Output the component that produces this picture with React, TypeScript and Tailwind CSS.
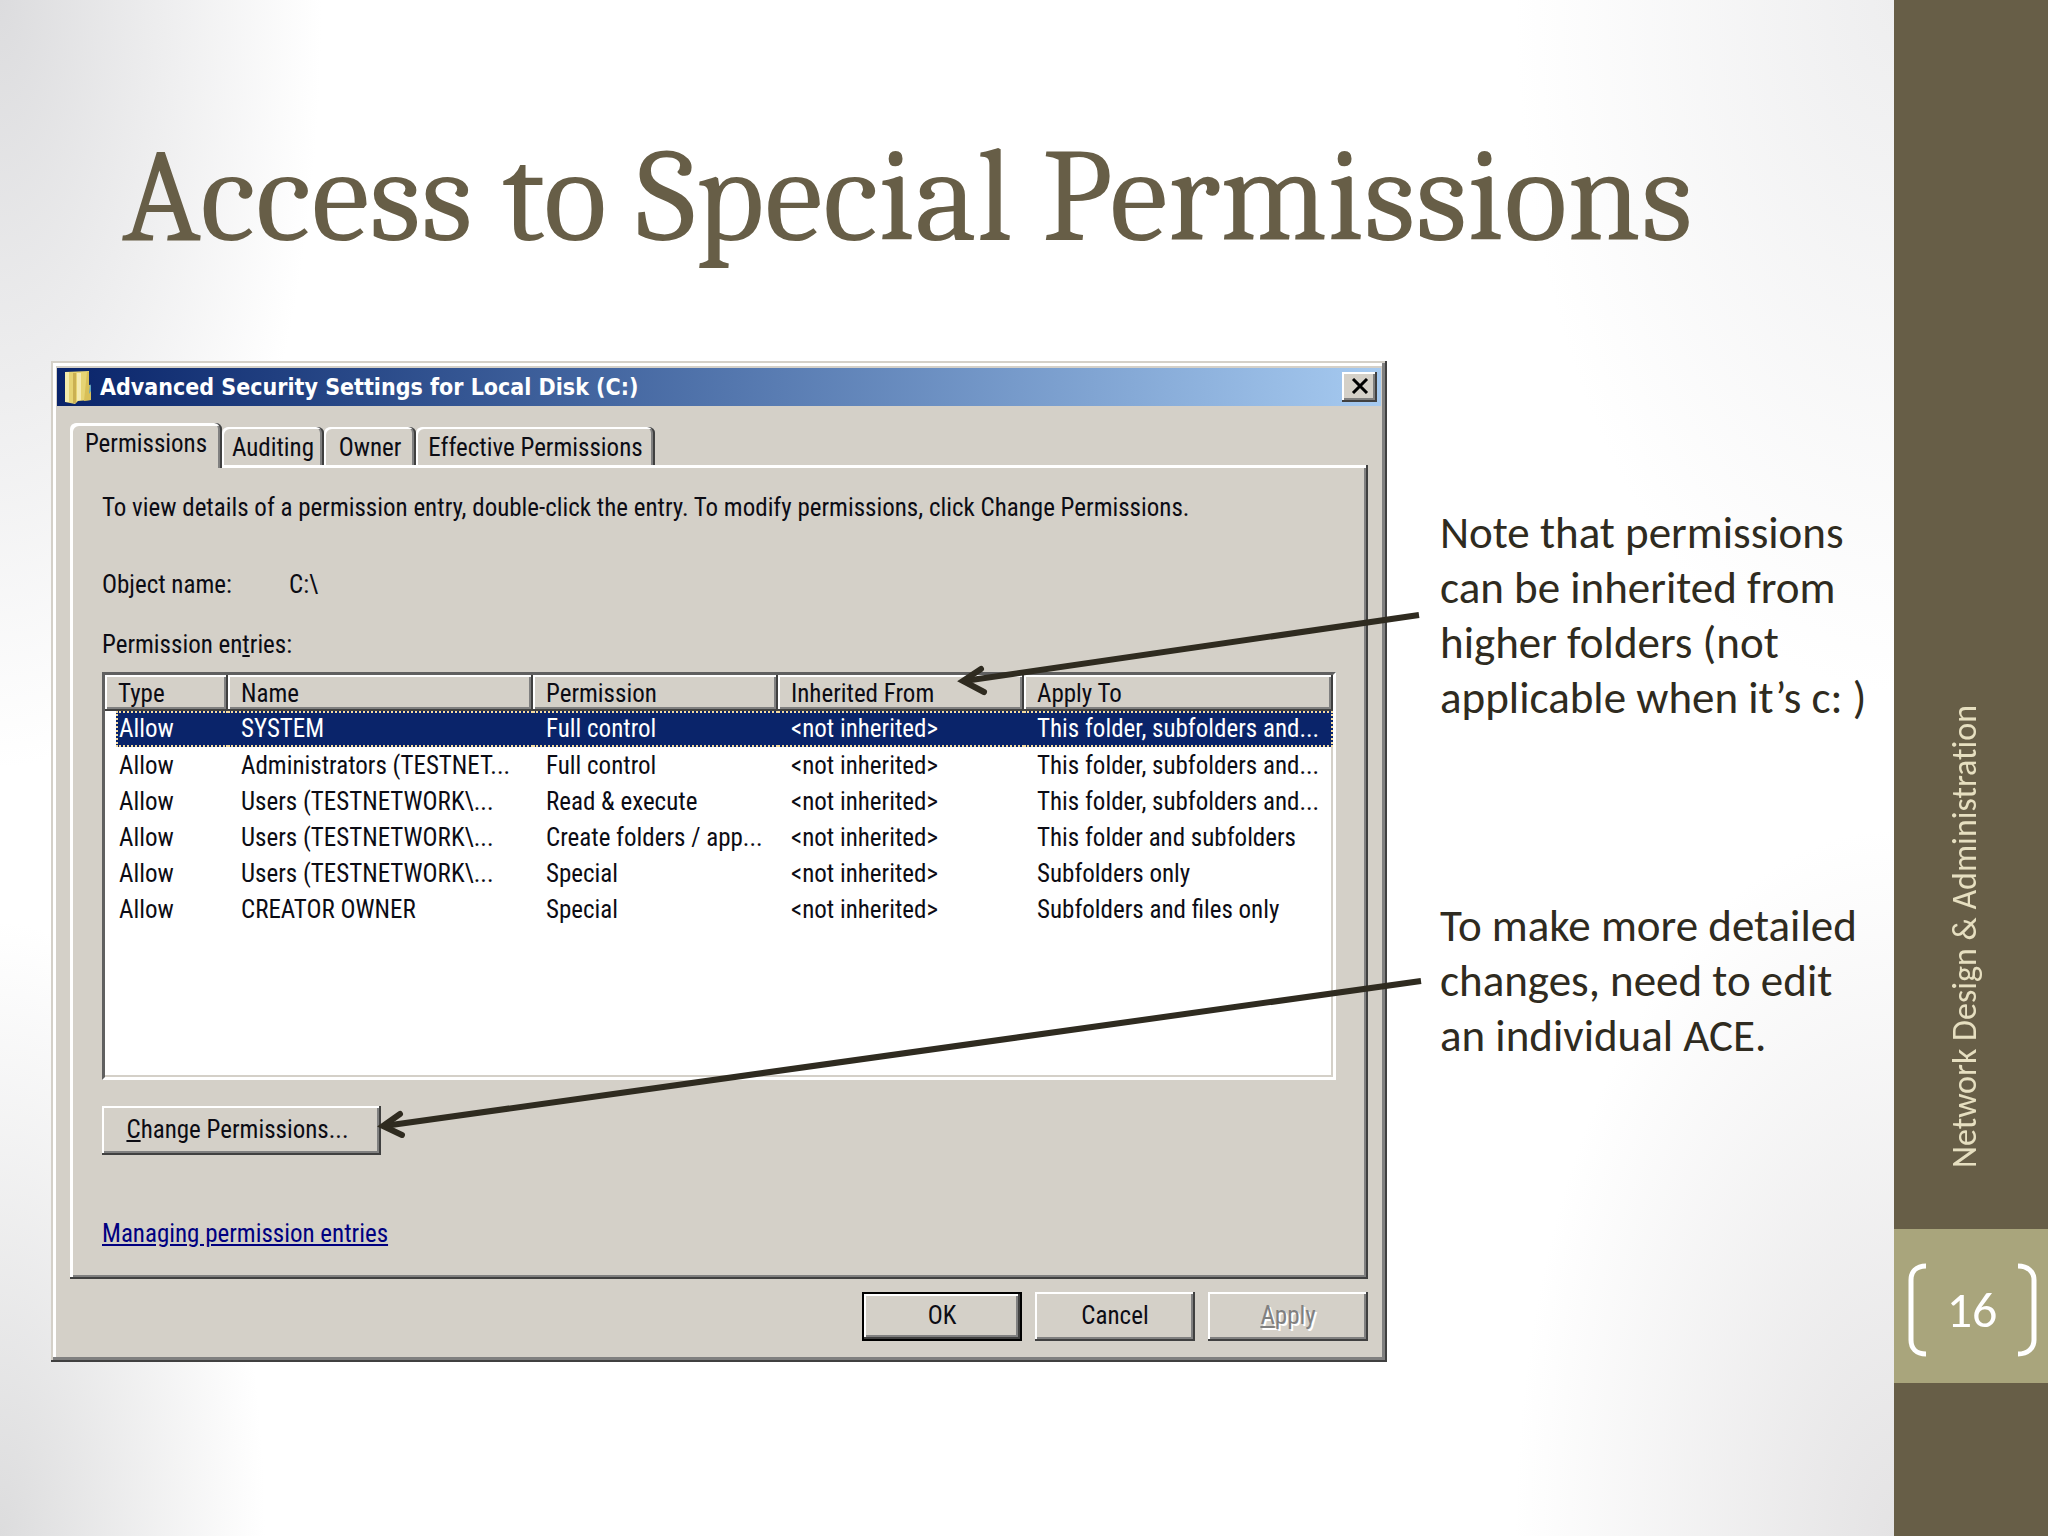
import { useState } from "react"

const TABS = [
  { name: "Permissions", width: "w-[152px]" },
  { name: "Auditing", width: "w-[102px]" },
  { name: "Owner", width: "w-[92px]" },
  { name: "Effective Permissions", width: "w-[239px]" },
]

const COLS = ["Type", "Name", "Permission", "Inherited From", "Apply To"]

const ENTRIES = [
  ["Allow", "SYSTEM", "Full control", "<not inherited>", "This folder, subfolders and..."],
  ["Allow", "Administrators (TESTNET...", "Full control", "<not inherited>", "This folder, subfolders and..."],
  ["Allow", "Users (TESTNETWORK\\...", "Read & execute", "<not inherited>", "This folder, subfolders and..."],
  ["Allow", "Users (TESTNETWORK\\...", "Create folders / app...", "<not inherited>", "This folder and subfolders"],
  ["Allow", "Users (TESTNETWORK\\...", "Special", "<not inherited>", "Subfolders only"],
  ["Allow", "CREATOR OWNER", "Special", "<not inherited>", "Subfolders and files only"],
]

const RAISED = "bg-[#d4d0c8] shadow-[inset_-2px_-2px_#404040,inset_2px_2px_#fff,inset_-4px_-4px_#808080]"

function FolderIcon() {
  return (
    <svg width="28" height="34" viewBox="0 0 28 34" aria-hidden="true">
      <path d="M1 2 L25 1 V15 L27 16 V30 L14 31 L11 34 L1 32 Z" fill="#e6d373" />
      <path d="M1 2 L5 2 V32 L1 32 Z" fill="#f5ecac" />
      <path d="M9 3 L12 3 V33 L9 33 Z" fill="#cbb052" />
      <path d="M13 3 L17 3 V30 L13 31 Z" fill="#f4eab2" />
      <path d="M23 2 L25 2 V15 L27 16 V30 L20 31 Z" fill="#d8bf58" />
      <path d="M26 14 L27 16 V21 L25 24 Z" fill="#5ea7c4" />
    </svg>
  )
}

function TitleBar() {
  return (
    <div className="flex h-[38px] items-center bg-linear-to-r from-[#0a246a] to-[#a6caf0] pr-1 pl-[7px]">
      <FolderIcon />
      <h2 className="ml-2 flex-1 font-['DejaVu_Sans_Condensed','DejaVu_Sans',sans-serif] text-[23px] font-bold text-white">
        Advanced Security Settings for Local Disk (C:)
      </h2>
      <button aria-label="Close" className={"flex h-[30px] w-[35px] items-center justify-center pb-0.5 " + RAISED}>
        <svg width="18" height="16" viewBox="0 0 18 16" stroke="#000" strokeWidth="3" aria-hidden="true">
          <path d="M2 1 L16 15 M16 1 L2 15" />
        </svg>
      </button>
    </div>
  )
}

function Tabs({ tab, setTab }: { tab: string; setTab: (t: string) => void }) {
  return (
    <div role="tablist" className="flex h-[42px] items-end">
      {TABS.map(t => (
        <button
          key={t.name}
          role="tab"
          aria-selected={tab === t.name}
          onClick={() => setTab(t.name)}
          className={
            "rounded-t-md bg-[#d4d0c8] whitespace-nowrap " + t.width +
            (tab === t.name
              ? " relative -mb-[3px] h-[45px] pb-1 shadow-[inset_-2px_0_#404040,inset_3px_3px_#fff,inset_-4px_0_#808080]"
              : " h-[38px] pt-1 shadow-[inset_-2px_0_#404040,inset_2px_2px_#fff,inset_-4px_0_#808080]")
          }
        >
          {t.name}
        </button>
      ))}
    </div>
  )
}

function EntryList() {
  const [selected, setSelected] = useState(0)
  return (
    <div className="mt-3 h-[408px] border-[3px] border-t-[#606060] border-r-white border-b-white border-l-[#606060] bg-white shadow-[inset_-2px_-2px_#d4d0c8]">
      <table aria-labelledby="entries-label" className="w-full table-fixed border-separate border-spacing-0 text-left">
        <colgroup>
          <col className="w-[123px]" />
          <col className="w-[305px]" />
          <col className="w-[245px]" />
          <col className="w-[246px]" />
          <col />
        </colgroup>
        <thead>
          <tr>
            {COLS.map(c => (
              <th key={c} className={"h-[36px] p-0 pt-0.5 pl-[13px] font-normal whitespace-nowrap " + RAISED}>{c}</th>
            ))}
          </tr>
        </thead>
        <tbody>
          {ENTRIES.map((row, i) => (
            <tr key={i} onClick={() => setSelected(i)} className={i === selected ? "text-white" : ""}>
              {row.map((cell, j) => (
                <td key={j} className="p-0">
                  <div
                    className={
                      "flex h-9 items-center whitespace-nowrap " +
                      (j === 0 ? "ml-[11px] pl-[3px] " : "pl-[13px] ") +
                      (i === selected ? "border-y-2 border-dotted border-[#f5dca0] bg-[#0a246a] " : "pt-0.5 ") +
                      (i === selected && j === 0 ? "border-l-2 pl-px" : "") +
                      (i === selected && j === 4 ? "border-r-2" : "")
                    }
                  >
                    {cell}
                  </div>
                </td>
              ))}
            </tr>
          ))}
        </tbody>
      </table>
    </div>
  )
}

function Dialog() {
  const [tab, setTab] = useState("Permissions")
  return (
    <section
      aria-label="Advanced Security Settings"
      className="min-w-0 flex-1 bg-[#d4d0c8] px-[6px] pt-[7px] pb-[21px] font-['Roboto_Condensed','Liberation_Sans',sans-serif] text-[25px] leading-[30px] text-[#0c0c14] shadow-[inset_-2px_-2px_#404040,inset_2px_2px_#d4d0c8,inset_-5px_-5px_#808080,inset_5px_5px_#fff]"
    >
      <TitleBar />
      <div className="px-[13px] pt-[17px]">
        <Tabs tab={tab} setTab={setTab} />
        <div className="px-8 pt-7 pb-[30px] shadow-[inset_-2px_-2px_#404040,inset_3px_3px_#fff,inset_-4px_-4px_#808080]">
          <p className="whitespace-nowrap">
            To view details of a permission entry, double-click the entry. To modify permissions, click Change Permissions.
          </p>
          <dl className="mt-[47px] flex">
            <dt className="w-[187px]">Object name:</dt>
            <dd>C:\</dd>
          </dl>
          <p id="entries-label" className="mt-[30px]">Permission en<u>t</u>ries:</p>
          <EntryList />
          <button className={"mt-[26px] flex h-[49px] w-[279px] items-center justify-center pr-2 pb-0.5 " + RAISED}>
            <span><u>C</u>hange Permissions...</span>
          </button>
          <p className="mt-16">
            <a href="#managing" className="text-[#000080] underline">Managing permission entries</a>
          </p>
        </div>
        <div className="mt-[13px] flex justify-end gap-[13px]">
          <button className="h-[49px] w-40 border-2 border-black bg-[#d4d0c8] pb-0.5 shadow-[inset_-2px_-2px_#404040,inset_2px_2px_#fff,inset_-4px_-4px_#808080]">OK</button>
          <button className={"h-[49px] w-40 pb-0.5 " + RAISED}>Cancel</button>
          <button disabled className={"h-[49px] w-40 pb-0.5 text-[#808080] [text-shadow:2px_2px_#fff] " + RAISED}><u>A</u>pply</button>
        </div>
      </div>
    </section>
  )
}

// callout arrows, drawn over the dialog from the notes on the right
function Arrows() {
  return (
    <svg className="pointer-events-none absolute inset-0 size-full" fill="none" stroke="#2f2b20" strokeWidth="6" aria-hidden="true">
      <path d="M1368 254 L913 320" />
      <path d="M930 308 L912 320 L933 331" strokeLinecap="round" />
      <path d="M1370 620 L333 765" />
      <path d="M349 753 L332 765 L351 774" strokeLinecap="round" />
    </svg>
  )
}

function Sidebar() {
  return (
    <aside className="flex w-[154px] shrink-0 flex-col bg-[#675e47] font-[Carlito,Lato,sans-serif]">
      <div className="flex h-[1229px] items-end justify-center pr-3 pb-[61px]">
        <p className="rotate-180 text-[34px] leading-10 whitespace-nowrap text-[#e6dfc0] [font-variant-ligatures:none] [writing-mode:vertical-rl]">
          Network Design &amp; Administration
        </p>
      </div>
      <div className="flex h-[154px] items-center justify-between bg-[#a9a57c] pt-2 pr-2.5 pl-3 text-white">
        <svg width="20" height="94" viewBox="0 0 20 94" fill="none" stroke="currentColor" strokeWidth="5" aria-hidden="true">
          <path d="M20 3 C10 3 5 9 5 17 V77 C5 85 10 91 20 91" />
        </svg>
        <span className="text-[50px] leading-[58px]">16</span>
        <svg width="20" height="94" viewBox="0 0 20 94" fill="none" stroke="currentColor" strokeWidth="5" aria-hidden="true">
          <path d="M0 3 C10 3 16 9 16 17 V77 C16 85 10 91 0 91" />
        </svg>
      </div>
    </aside>
  )
}

export default function App() {
  return (
    <div className="flex min-h-screen">
      <main className="min-w-0 flex-1 bg-[radial-gradient(ellipse_17%_50%_at_0_0,#dcdcde,transparent),radial-gradient(ellipse_14%_40%_at_0_100%,#dcdcdd,transparent),radial-gradient(ellipse_20%_45%_at_100%_0,#eeeeef,transparent),radial-gradient(ellipse_20%_46%_at_100%_100%,#e4e3e4,transparent)] pl-[51px]">
        <h1 className="flex h-[361px] items-center pt-8 pl-[71px] font-[Cambria,Caladea,'Liberation_Serif',serif] text-[132px] leading-none whitespace-nowrap text-[#675e47]">
          Access to Special Permissions
        </h1>
        <div className="relative flex">
          <Dialog />
          <div className="w-[507px] shrink-0 pt-36 pl-[53px] font-[Carlito,Lato,sans-serif] text-[45px] leading-[55px] text-[#2f2b20]">
            <p>Note that permissions<br />can be inherited from<br />higher folders (not<br />applicable when it’s c: )</p>
            <p className="mt-[173px]">To make more detailed<br />changes, need to edit<br />an individual ACE.</p>
          </div>
          <Arrows />
        </div>
      </main>
      <Sidebar />
    </div>
  )
}
